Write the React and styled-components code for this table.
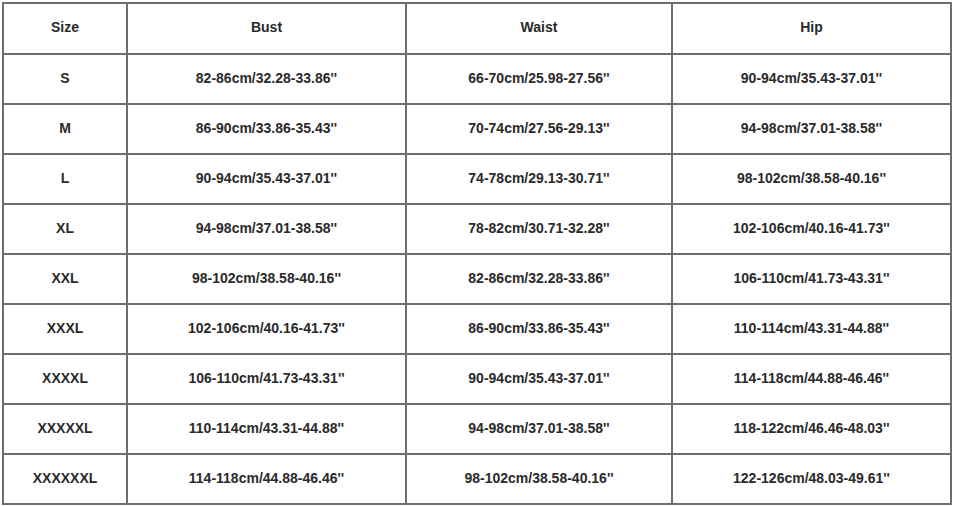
import React from "react";
import styled, { createGlobalStyle } from "styled-components";

const Global = createGlobalStyle`
  html, body { margin: 0; padding: 0; background: #ffffff; }
  body { font-family: "Liberation Sans", Arial, sans-serif; }
`;

const Page = styled.div`
  padding: 2px 0 0 2px;
`;

const Table = styled.table`
  border-collapse: collapse;
  table-layout: fixed;
  width: 950px;
`;

const Cell = styled.td`
  border: 2px solid #6e6e6e;
  height: 46px;
  padding: 0;
  text-align: center;
  vertical-align: middle;
  font-size: 14px;
  font-weight: 700;
  color: #2a2a2a;
  padding-bottom: ${(p) => (p.$head ? "3px" : "2px")};
`;

const header = ["Size", "Bust", "Waist", "Hip"];
const rows = [
  ["S", "82-86cm/32.28-33.86''", "66-70cm/25.98-27.56''", "90-94cm/35.43-37.01''"],
  ["M", "86-90cm/33.86-35.43''", "70-74cm/27.56-29.13''", "94-98cm/37.01-38.58''"],
  ["L", "90-94cm/35.43-37.01''", "74-78cm/29.13-30.71''", "98-102cm/38.58-40.16''"],
  ["XL", "94-98cm/37.01-38.58''", "78-82cm/30.71-32.28''", "102-106cm/40.16-41.73''"],
  ["XXL", "98-102cm/38.58-40.16''", "82-86cm/32.28-33.86''", "106-110cm/41.73-43.31''"],
  ["XXXL", "102-106cm/40.16-41.73''", "86-90cm/33.86-35.43''", "110-114cm/43.31-44.88''"],
  ["XXXXL", "106-110cm/41.73-43.31''", "90-94cm/35.43-37.01''", "114-118cm/44.88-46.46''"],
  ["XXXXXL", "110-114cm/43.31-44.88''", "94-98cm/37.01-38.58''", "118-122cm/46.46-48.03''"],
  ["XXXXXXL", "114-118cm/44.88-46.46''", "98-102cm/38.58-40.16''", "122-126cm/48.03-49.61''"],
];

const widths = [124, 279, 266, 279];

export default function App() {
  return (
    <Page>
      <Global />
      <Table>
        <colgroup>
          {widths.map((w, i) => (
            <col key={i} style={{ width: w }} />
          ))}
        </colgroup>
        <thead>
          <tr>
            {header.map((h) => (
              <Cell as="th" $head key={h}>
                {h}
              </Cell>
            ))}
          </tr>
        </thead>
        <tbody>
          {rows.map((r) => (
            <tr key={r[0]}>
              {r.map((c, i) => (
                <Cell key={i}>{c}</Cell>
              ))}
            </tr>
          ))}
        </tbody>
      </Table>
    </Page>
  );
}
